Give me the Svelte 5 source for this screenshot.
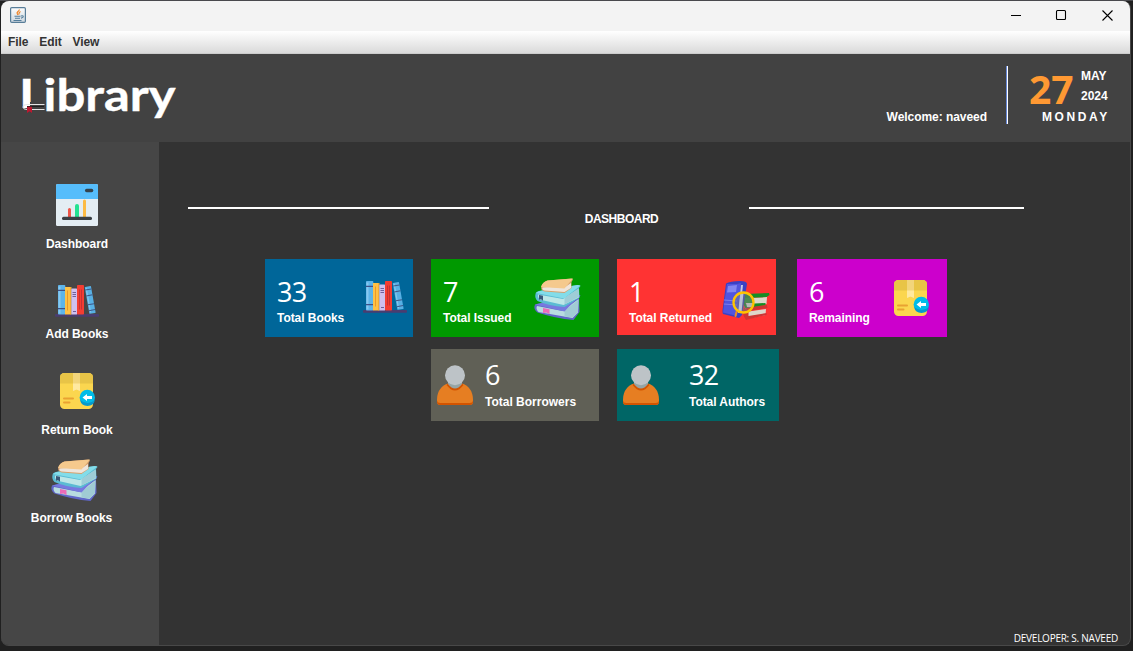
<script>
  const nav = [
    { label: 'Dashboard', icon: 'dashboard', top: 42, gap: 11, shift: 0, iconShift: 0 },
    { label: 'Add Books', icon: 'books', top: 34, gap: 10, shift: 0, iconShift: 0 },
    { label: 'Return Book', icon: 'box', top: 32, gap: 13, shift: 0, iconShift: 2 },
    { label: 'Borrow Books', icon: 'stack', top: 22, gap: 9, shift: -11, iconShift: 4 }
  ];
  const cards = [
    { value: 33, label: 'Total Books', icon: 'books', tone: 'blue' },
    { value: 7, label: 'Total Issued', icon: 'stack', tone: 'green' },
    { value: 1, label: 'Total Returned', icon: 'search', tone: 'red' },
    { value: 6, label: 'Remaining', icon: 'box', tone: 'magenta' },
    { value: 6, label: 'Total Borrowers', icon: 'user', tone: 'olive' },
    { value: 32, label: 'Total Authors', icon: 'user', tone: 'teal' }
  ];
</script>

{#snippet icon(name)}
  {#if name === 'dashboard'}
    <svg width="42" height="42" viewBox="0 0 42 42">
      <rect width="42" height="42" rx="1.5" fill="#e4edf3" />
      <path d="M0 15V1.500Q0 0 1.500 0h39Q42 0 42 1.500V15z" fill="#56bdfb" />
      <rect x="29" y="4.800" width="8.300" height="3.400" rx="1.600" fill="#35434d" />
      <path d="M12 34v-8.500a1.500 1.500 0 0 1 3 0V34z" fill="#ee5548" />
      <path d="M19 34V22a2 2 0 0 1 4 0v12z" fill="#24e291" />
      <path d="M27 34V17a1.500 1.500 0 0 1 3 0v17z" fill="#fcbb45" />
      <rect x="6" y="32.800" width="30" height="3.200" rx="1.500" fill="#3a4045" />
    </svg>
  {:else if name === 'books'}
    <svg width="44" height="32" viewBox="0 0 44 32">
      <rect x="0" y="29" width="44" height="2.700" rx=".8" fill="#493d70" />
      <rect x="3" y="0" width="7.300" height="29.500" rx=".8" fill="#5db4ea" />
      <path d="M3.500 1.500h2v27h-2z" fill="#86c9f1" />
      <path d="M3 4.700h7v1.300H3zM3 23h7v1.300H3z" fill="#3f4f87" />
      <rect x="10" y="2" width="6.300" height="27.500" fill="#ffc145" />
      <path d="M12 5.500h1v20h-1z" fill="#eb9929" />
      <path d="M15.300 2h1v27.500h-1z" fill="#f0a02d" />
      <rect x="16.300" y="3.500" width="5.700" height="26" rx=".5" fill="#cfc0ef" />
      <path d="M17.500 7.500h3.500M17.500 9.500h3.500M17.500 11.500h3.500M18 26.500h3" stroke="#70609b" />
      <rect x="22" y="0" width="7" height="29.500" rx=".8" fill="#f33d32" />
      <path d="M24.500 4.500v20M26.500 4.500v20" stroke="#b92d35" stroke-width=".8" />
      <g transform="rotate(-10 30 2)">
        <rect x="29.700" y="2" width="6.300" height="27.300" rx=".5" fill="#58b0e4" />
        <path d="M31 3v25" stroke="#80c7ee" stroke-width="1.200" />
        <path d="M29.700 5h6.300M29.700 11h6.300M29.700 20h6.300M29.700 26h6.300" stroke="#3f5687" />
      </g>
    </svg>
  {:else if name === 'box'}
    <svg width="36" height="37" viewBox="0 0 36 37">
      <rect x="0" y="0" width="33" height="36" rx="4.500" fill="#fbd64f" />
      <path d="M0 10.500V4.500Q0 0 4.500 0h24Q33 0 33 4.500v6z" fill="#e8c447" />
      <path d="M13 0h7v18l-3.500-1.500L13 18z" fill="#f2d57b" />
      <path d="M13 10.500h7V18l-3.500-1.500L13 18z" fill="#ffe9a0" />
      <path d="M4 25.500h9M4 29.500h5.500" stroke="#e9a232" stroke-width="2" stroke-linecap="round" />
      <circle cx="27.300" cy="24.500" r="7.700" fill="#00bce8" />
      <path d="M20 27a7.700 7.700 0 0 0 15 0q-7 6-15 0" fill="#0799cc" />
      <path d="m22.500 24.500 4.500-3.500v2h5v3h-5v2z" fill="#fff" />
    </svg>
  {:else if name === 'stack'}
    <svg width="48" height="43" viewBox="0 0 47 43">
      <path d="M1.500 26.500Q8 24 14 24l31-7.500 2 1-1.500 2.500.5 14-6 8Q22 40.500 4 34.500-.5 31 1.500 26.500" fill="#6067c8" />
      <path d="M3.500 28 29 33l16-12-.5 13.500L39 40 5 34Q2 31 3.500 28" fill="#b8dce0" />
      <path d="m31 33 14-11.500-.5 12.500L39 39.500l-8-1z" fill="#a0cbd4" />
      <path d="M1.500 26.500 14 24l32-6.500L31 33.500z" fill="#7779df" />
      <path d="m9.500 30 6.500 1.200v5l-3-1.700-3.500.6z" fill="#ed6bb8" />
      <path d="M2 16Q2 13 8 12.500L45 7l2 1-1.500 2 .5 9.500-15 9.500Q15 28 4 23 1 20 2 16" fill="#5bbbd3" />
      <path d="m4.500 16.500 25 4.500 15.500-10 .3 8.500L30 27 6 21.500Q4 19 4.500 16.500" fill="#bde6e7" />
      <path d="m31 20 14-9.500.3 8.500L31 26.500z" fill="#9ecdd7" />
      <path d="M2.500 15Q5 12.500 9 12.500L44 7l3 .6-16.500 12.900z" fill="#83dce9" />
      <path d="m5.500 17 4 .8v5l-2-1.500-2 .5z" fill="#385879" />
      <path d="M8 8Q9 4 14 2.500L38 .5l1.500 1L38 4v6l-7 5-20-1.500Q6.500 12 8 8" fill="#d8a06c" />
      <path d="M9 9.500q3-1 22 0L37.500 5v5L31 14l-20-1.500Q8 11.500 9 9.500" fill="#eee5dc" />
      <path d="M7.500 9Q9 4 14 2.500L39.500.5 31 10.500z" fill="#f5c98d" />
    </svg>
  {:else if name === 'search'}
    <svg width="48" height="40" viewBox="0 0 48 40">
      <path d="m23 31 21-3-.5 6L25 38z" fill="#ded6cb" />
      <path d="m22 27 23-3 .5 3-19 3v5l18-3v2L24 39q-5-7-2-12" fill="#ce3534" />
      <path d="m23 24 20-1-20 5z" fill="#f33740" />
      <path d="m25 17 20-1-.5 7L25 26z" fill="#ddd8cb" />
      <path d="m22 13 25-1 .5 2-3 2-20 1-1 6 20-1v2l-20 3q-5-6-1.500-14" fill="#158d25" />
      <path d="M4 2.500Q8 0 18 0q7 0 7 3l-5 31-3 3-16-4Q0 31 1 26z" fill="#3a41c4" />
      <path d="m15 3 4-1-4 33-14-3.500L5 3z" fill="#5055df" />
      <path d="m6 5 9-1-1 7-9 .5z" fill="#8286f2" />
      <path d="m2 19 13 1M2 23l13 1" stroke="#7d80ed" />
      <path d="m20 4-3 28" stroke="#c5cae3" stroke-width="2" />
      <circle cx="21.500" cy="21.500" r="10" fill="#777e85" fill-opacity=".48" />
      <path d="m20 12-2 19" stroke="#b9c1d4" stroke-width="3" />
      <path d="M23 17h8v5h-8z" fill="#4c8c52" />
      <path d="M24 22h7v4h-6z" fill="#b4b7b4" />
      <path d="M24 27h5l-3 3z" fill="#bf4445" />
      <circle cx="21.500" cy="21.500" r="10" fill="none" stroke="#ffc400" stroke-width="2.300" />
      <path d="m14.500 31-1 4" stroke="#ed8b25" stroke-width="2" stroke-linecap="round" />
    </svg>
  {:else}
    <svg width="36" height="41" viewBox="0 0 36 41">
      <path d="M0 34.500C0 26 5 20 11 18.500h14c6 1.500 11 7.500 11 16v2q0 3.500-3.500 3.500h-29Q0 40 0 36.500z" fill="#e67e22" />
      <path d="M0 35.500Q.5 38 3.500 38h29q3 0 3.500-2.500v1q0 3.500-3.500 3.500h-29Q0 40 0 36.500zM9.500 20q8.500 11 17 0l-1.500-1.500q-7 3-14 0z" fill="#d35400" />
      <path d="M11 19q7 9 14 0v-3H11z" fill="#95a5a6" />
      <circle cx="18" cy="10.200" r="10" fill="#bdc3c7" />
    </svg>
  {/if}
{/snippet}

<div class="window">
  <div class="titlebar">
    <svg class="java" width="16" height="16" viewBox="0 0 16 16">
      <defs>
        <linearGradient id="tile" x1="0" y1="0" x2="0" y2="1"><stop stop-color="#fdfdfd" /><stop offset="1" stop-color="#ccd7df" /></linearGradient>
      </defs>
      <rect x=".6" y=".6" width="14.800" height="14.800" rx="1.200" fill="url(#tile)" stroke="#587d98" stroke-width="1.200" />
      <path d="M9.200 2.500c.5 2-3 2.300-2 4L8 8M10.500 4.500C8.500 5.500 9 6 9 7.500" fill="none" stroke="#ed8224" stroke-width="1.200" />
      <path d="M4.500 9.300h6M5 11.200h5M3.500 13.500h8M11 9q3-.7 2 1.200l-2 1" fill="none" stroke="#547e9c" stroke-width="1.100" />
    </svg>
    <svg class="controls" width="103" height="12" viewBox="0 0 103 12">
      <path d="M0 6.500h10" stroke="#000" />
      <rect x="45.500" y="1.500" width="9" height="9" rx="1" fill="none" stroke="#000" stroke-width="1.100" />
      <path d="m91.500 1.500 10 10m0-10-10 10" stroke="#000" stroke-width="1.100" />
    </svg>
  </div>
  <nav class="menu"><span>File</span><span>Edit</span><span>View</span></nav>

  <header>
    <svg class="logo" width="160" height="50" viewBox="0 0 160 50">
      <text x="-3" y="39" textLength="27" lengthAdjust="spacingAndGlyphs">L</text>
      <path class="mask" d="M8 30H27v12H-1v-6h9z" />
      <path class="page" d="M22.500 32.500H5q-4 0-4 2.500t4 2.500h17.500" />
      <path class="shade" d="M5 34.500h17" />
      <path class="ribbon" d="M5 34.800h5v6.200l-2.500-1.800L5 41z" />
      <text x="21.500" y="38.500" textLength="132" lengthAdjust="spacingAndGlyphs">ibrary</text>
    </svg>
    <span class="welcome">Welcome: naveed</span>
    <div class="rule"></div>
    <div class="date">
      <div class="daterow">
        <span class="day">27</span>
        <div class="month"><span>MAY</span><span>2024</span></div>
      </div>
      <span class="weekday">MONDAY</span>
    </div>
  </header>

  <div class="body">
    <aside>
      {#each nav as item}
        <div class="item" style:margin-top="{item.top}px" style:gap="{item.gap}px" style:margin-left="{item.shift}px">
          <div style:padding-left="{item.iconShift}px">{@render icon(item.icon)}</div>
          <span>{item.label}</span>
        </div>
      {/each}
    </aside>
    <main>
      <div class="heading">
        <i class="left"></i>
        <h1>DASHBOARD</h1>
        <i class="right"></i>
      </div>
      <section>
        {#each cards as card}
          <article class={card.tone}>
            <div class="figures"><strong>{card.value}</strong><span>{card.label}</span></div>
            <div class="art">{@render icon(card.icon)}</div>
          </article>
        {/each}
      </section>
      <footer>DEVELOPER: S. NAVEED</footer>
    </main>
  </div>
</div>

<style>
  :global(body) { background: #202020; overflow: hidden; }
  :global(#app) { border-top: 1px solid #49494d; }
  .window {
    width: 1130px; height: 645px; box-sizing: border-box; margin-left: 1px;
    display: flex; flex-direction: column; overflow: hidden;
    border: solid #484848; border-width: 0 1px 1px 0; border-radius: 8px;
    background: #333; color: #fff; font: bold 12px/14px "Liberation Sans", Arial, sans-serif;
  }
  svg { display: block; flex: none; }
  .titlebar { height: 30px; flex: none; background: #f3f3f3; display: flex; justify-content: space-between; padding: 0 16px 0 9px; }
  .java { margin-top: 6px; }
  .controls { margin-top: 8px; }
  .menu { height: 23px; flex: none; box-sizing: border-box; padding: 4px 7px; display: flex; gap: 11px; letter-spacing: -.1px; color: #333; background: linear-gradient(#fff, #dadada); border-bottom: 1px solid #ccc; }
  header { height: 88px; flex: none; box-sizing: border-box; background: #424242; display: flex; padding: 12px 20px 0 21px; }
  .logo { margin-top: 6px; font: 700 44px Lato, sans-serif; fill: #fff; overflow: visible; }
  .logo text { stroke: #fff; stroke-width: .4px; }
  .mask { fill: #424242; }
  .page { fill: none; stroke: #e5e5e5; }
  .shade { stroke: #202020; }
  .ribbon { fill: #bd1830; }
  .welcome { margin: 44px 19px 0 auto; letter-spacing: -.05px; }
  .rule { width: 1px; height: 58px; background: #fff; border-left: 1px solid #6687d7; }
  .date { width: 81px; margin-left: 21px; }
  .daterow { display: flex; height: 44px; }
  .day { width: 52px; font: bold 39px/46px "Open Sans", sans-serif; color: #ff9933; }
  .month { display: flex; flex-direction: column; gap: 6px; padding-top: 3px; }
  .weekday { display: block; margin-left: 13px; letter-spacing: 2.600px; white-space: nowrap; }
  .body { flex: 1; display: flex; min-height: 0; }
  aside { width: 158px; flex: none; box-sizing: border-box; padding-right: 6px; background: #464646; display: flex; flex-direction: column; }
  .item { display: flex; flex-direction: column; align-items: center; letter-spacing: -.05px; }
  main { flex: 1; display: flex; flex-direction: column; }
  .heading { display: flex; padding: 65px 0 0 29px; }
  .heading i { height: 2px; background: #fff; }
  .left { width: 301px; }
  .right { width: 275px; }
  h1 { width: 260px; margin: 5px 0 0; padding-left: 5px; box-sizing: border-box; font: inherit; letter-spacing: -.5px; text-align: center; }
  section { display: grid; grid-template-columns: 148px 168px 162px 150px; grid-template-rows: 78px 72px; gap: 12px 18px; margin: 33px 0 0 106px; }
  article { display: flex; justify-content: space-between; box-sizing: border-box; padding: 14px 6px 0 12px; white-space: nowrap; letter-spacing: -.05px; }
  .figures { display: flex; flex-direction: column; gap: 1px; }
  strong { font: 400 27px/37px "Open Sans", sans-serif; letter-spacing: -.7px; }
  .blue { background: #069; }
  .green { background: #090; padding-right: 18px; }
  .red { background: #f33; width: 159px; height: 76px; }
  .magenta { background: #c0c; padding-right: 17px; }
  .olive, .teal { flex-direction: row-reverse; justify-content: flex-end; padding: 7px 0 0 6px; gap: 12px; }
  .olive .figures, .teal .figures { gap: 2px; }
  .olive { background: #606056; grid-column: 2; letter-spacing: 0; }
  .teal { background: #066; gap: 30px; }
  .art { padding-top: 8px; }
  .green .art { padding-top: 5px; }
  .magenta .art { padding-top: 7px; }
  .olive .art, .teal .art { padding-top: 9px; }
  footer { margin: auto 12px 0 0; text-align: right; font: 10px/14px "Open Sans", sans-serif; letter-spacing: -.250px; }
</style>
